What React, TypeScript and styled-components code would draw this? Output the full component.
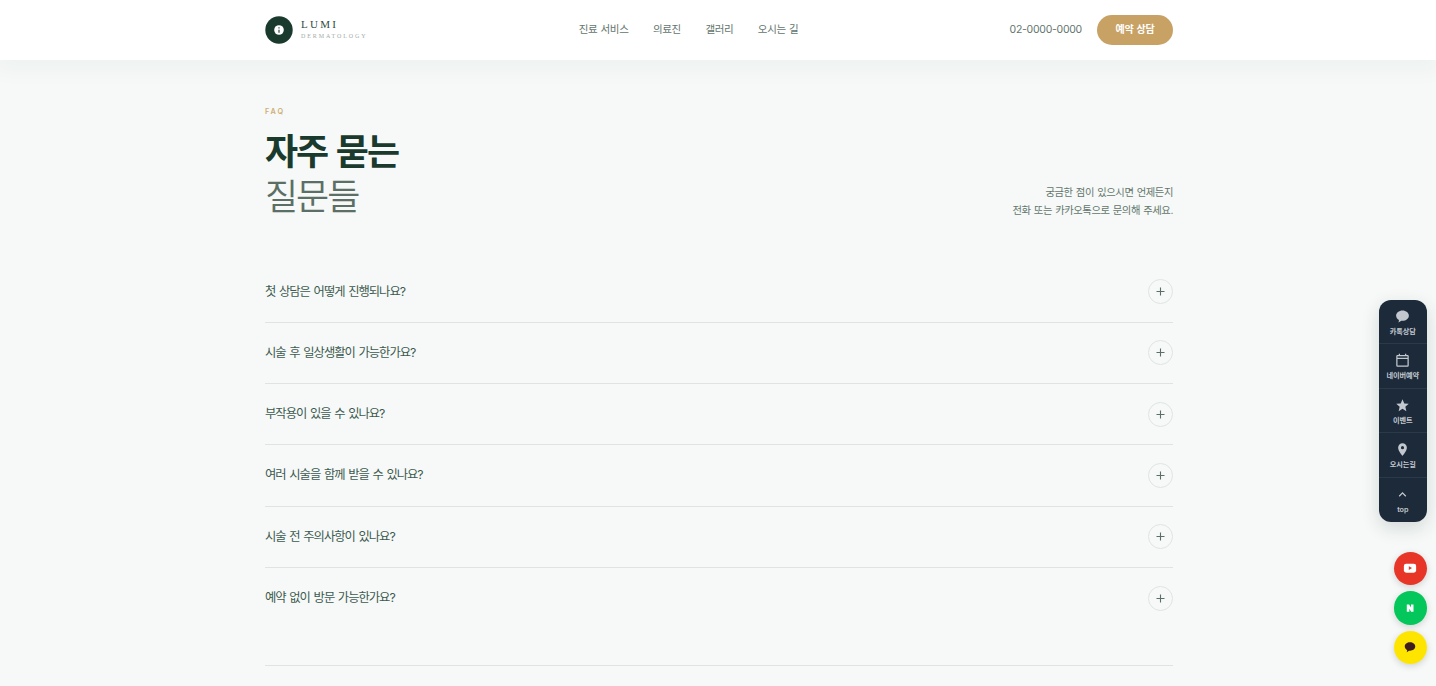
import React from "react";
import styled, { createGlobalStyle } from "styled-components";

const Global = createGlobalStyle`
  * { box-sizing: border-box; }
  body { margin: 0; background: #f6f9f7; overflow: hidden; font-family: Inter, "Noto Sans CJK KR", sans-serif; }
  a { color: inherit; text-decoration: none; }
  button { font: inherit; border: 0; padding: 0; }
`;

const Page = styled.div`
  height: 686px;
  overflow: hidden;
`;

const Header = styled.header`
  position: relative;
  height: 60px;
  background: #fff;
  box-shadow: 0 3px 22px 6px rgba(26, 58, 46, 0.04);
`;

const Container = styled.div`
  width: 908px;
  margin: 0 auto;
  position: relative;
  left: 1px;
`;

const HeaderInner = styled(Container)`
  height: 59px;
  display: flex;
  justify-content: space-between;
  align-items: center;
`;

const Brand = styled.a`
  display: flex;
  align-items: center;
  gap: 8px;
`;

const BrandMark = styled.svg`
  width: 28px;
  height: 28px;
  display: block;
`;

const BrandText = styled.span`
  display: flex;
  flex-direction: column;
  font-family: "Liberation Serif", serif;
`;

const BrandName = styled.span`
  font-size: 11px;
  line-height: 11px;
  letter-spacing: 2.3px;
  color: #2f4a3f;
`;

const BrandSub = styled.span`
  font-size: 6px;
  line-height: 9px;
  margin-top: 2px;
  letter-spacing: 1.9px;
  color: #a3aba7;
`;

const Nav = styled.nav`
  display: flex;
  gap: 24.5px;
  padding-top: 1px;
  font-size: 10.5px;
  line-height: 16px;
  color: #63756d;
  letter-spacing: -0.35px;
  word-spacing: 0.5px;
`;

const Actions = styled.div`
  display: flex;
  align-items: center;
  justify-content: flex-end;
  gap: 15px;
`;

const Phone = styled.a`
  font-size: 10.5px;
  line-height: 16px;
  padding-top: 1px;
  letter-spacing: -0.27px;
  color: #63756d;
`;

const Reserve = styled.button`
  width: 76px;
  height: 30px;
  border-radius: 15px;
  background: #c8a265;
  color: #fff;
  font-size: 10px;
  line-height: 28px;
  padding-bottom: 1px;
  font-weight: 600;
  letter-spacing: -0.25px;
  word-spacing: 0.8px;
`;

const SectionHead = styled.div`
  display: flex;
  justify-content: space-between;
  align-items: flex-end;
  padding-top: 46.5px;
`;

const Eyebrow = styled.div`
  font-size: 7.3px;
  line-height: 10px;
  font-weight: 600;
  letter-spacing: 1.9px;
  color: #cfae78;
`;

const Title = styled.h2`
  margin: 13px 0 0;
  font-size: 36px;
  line-height: 45px;
  font-weight: 600;
  letter-spacing: -2px;
  word-spacing: 1.5px;
  color: #1a3a2e;
`;

const TitleLight = styled.span`
  display: block;
  font-weight: 350;
  color: #5c6f66;
`;

const Lead = styled.p`
  margin: 0;
  padding-bottom: 0.5px;
  text-align: right;
  font-size: 10.3px;
  line-height: 17.3px;
  letter-spacing: -0.4px;
  word-spacing: 0.7px;
  color: #63756d;
`;

const List = styled.ul`
  list-style: none;
  margin: 42px 0 0;
  padding: 0;
`;

const Item = styled.li`
  height: 61.25px;
  display: flex;
  align-items: center;
  justify-content: space-between;
  border-bottom: 1px solid #dfe4e1;
  &:last-child { border-bottom: 0; }
`;

const Question = styled.span`
  font-size: 12.3px;
  line-height: 20px;
  letter-spacing: -1px;
  word-spacing: 1.2px;
  color: #3d5a50;
`;

const Toggle = styled.span`
  width: 25px;
  height: 25px;
  border: 1px solid #dfe5e2;
  border-radius: 50%;
  display: grid;
  place-items: center;
  svg { width: 9px; height: 9px; display: block; }
`;

const SectionEnd = styled.hr`
  margin: 35.5px 0 0;
  border: 0;
  height: 1px;
  background: #dfe4e1;
`;

const Rail = styled.aside`
  position: fixed;
  top: 299.5px;
  right: 9px;
  width: 48.5px;
  border-radius: 12px;
  overflow: hidden;
  background: #1c2a3a;
  color: #c3c8ce;
`;

const RailShadow = styled(Rail)`
  height: 222px;
  background: none;
  box-shadow: 0 6px 18px rgba(28, 42, 58, 0.16);
`;

const RailLink = styled.a`
  height: 44.6px;
  display: flex;
  flex-direction: column;
  align-items: center;
  padding-top: 9px;
  border-bottom: 1px solid #2b3a4a;
  &:last-child { border-bottom: 0; }
  svg { width: 15px; height: 15px; display: block; flex: none; }
`;

const RailLabel = styled.span`
  margin-top: 3px;
  font-size: 7.2px;
  line-height: 10px;
  font-weight: 600;
  letter-spacing: -0.1px;
  white-space: nowrap;
`;

const Socials = styled.div`
  position: fixed;
  right: 9px;
  top: 551.5px;
  display: flex;
  flex-direction: column;
  gap: 6px;
`;

const Social = styled.a<{ $bg: string }>`
  width: 33.5px;
  height: 33.5px;
  border-radius: 50%;
  background: ${(p) => p.$bg};
  display: grid;
  place-items: center;
  box-shadow: 0 2px 7px rgba(0, 0, 0, 0.16);
  svg { width: 14px; height: 14px; display: block; }
`;

const questions = [
  "첫 상담은 어떻게 진행되나요?",
  "시술 후 일상생활이 가능한가요?",
  "부작용이 있을 수 있나요?",
  "여러 시술을 함께 받을 수 있나요?",
  "시술 전 주의사항이 있나요?",
  "예약 없이 방문 가능한가요?",
];

const quickLinks = [
  {
    label: "카톡상담",
    icon: <path fill="currentColor" d="M12 2.500C6.300 2.500 1.800 6.200 1.800 10.700c0 2.900 1.800 5.400 4.600 6.900L5.600 21.500l4.600-2.700c.6.1 1.200.1 1.800.1 5.700 0 10.200-3.700 10.200-8.200S17.700 2.500 12 2.500z" />,
  },
  {
    label: "네이버예약",
    icon: <path fill="currentColor" d="M20 3h-2V1h-2v2H8V1H6v2H4a2 2 0 0 0-2 2v15a2 2 0 0 0 2 2h16a2 2 0 0 0 2-2V5a2 2 0 0 0-2-2zm0 17H4V9.500h16V20zm0-12.500H4V5h16v2.500z" />,
  },
  {
    label: "이벤트",
    icon: <path fill="currentColor" d="M12 17.270 18.180 21l-1.640-7.030L22 9.240l-7.190-.61L12 2 9.190 8.630 2 9.240l5.460 4.730L5.820 21z" />,
  },
  {
    label: "오시는길",
    icon: <path fill="currentColor" d="M12 2a7 7 0 0 0-7 7c0 5.250 7 13 7 13s7-7.750 7-13a7 7 0 0 0-7-7zm0 9.500a2.500 2.500 0 1 1 0-5 2.500 2.500 0 0 1 0 5z" />,
  },
  {
    label: "top",
    icon: <path fill="currentColor" d="m7.400 15.400 4.600-4.600 4.600 4.600L18 14l-6-6-6 6z" />,
  },
];

export default function App() {
  return (
    <Page>
      <Global />
      <Header>
        <HeaderInner>
          <Brand href="#">
            <BrandMark viewBox="0 0 28 28">
              <circle cx="14" cy="14" r="13.7" fill="#1a3a2e" />
              <circle cx="14" cy="14" r="4.8" fill="#fff" />
              <path d="M14 11.300v1.200M14 13.700v3" stroke="#1a3a2e" strokeWidth="1.1" />
            </BrandMark>
            <BrandText>
              <BrandName>LUMI</BrandName>
              <BrandSub>DERMATOLOGY</BrandSub>
            </BrandText>
          </Brand>
          <Nav>
            <a>진료 서비스</a>
            <a>의료진</a>
            <a>갤러리</a>
            <a>오시는 길</a>
          </Nav>
          <Actions>
            <Phone>02-0000-0000</Phone>
            <Reserve>예약 상담</Reserve>
          </Actions>
        </HeaderInner>
      </Header>

      <Container as="main">
        <SectionHead>
          <div>
            <Eyebrow>FAQ</Eyebrow>
            <Title>
              자주 묻는
              <TitleLight>질문들</TitleLight>
            </Title>
          </div>
          <Lead>
            궁금한 점이 있으시면 언제든지
            <br />
            전화 또는 카카오톡으로 문의해 주세요.
          </Lead>
        </SectionHead>
        <List>
          {questions.map((q) => (
            <Item key={q}>
              <Question>{q}</Question>
              <Toggle>
                <svg viewBox="0 0 9 9">
                  <path d="M4.500.500v8M.500 4.500h8" stroke="#5c6f66" strokeWidth="1.1" />
                </svg>
              </Toggle>
            </Item>
          ))}
        </List>
        <SectionEnd />
      </Container>

      <RailShadow as="div" />
      <Rail>
        {quickLinks.map((l) => (
          <RailLink key={l.label}>
            <svg viewBox="0 0 24 24">{l.icon}</svg>
            <RailLabel>{l.label}</RailLabel>
          </RailLink>
        ))}
      </Rail>

      <Socials>
        <Social $bg="#e73527">
          <svg viewBox="0 0 24 24">
            <rect x="1.500" y="4.500" width="21" height="15.500" rx="4" fill="#fff" />
            <path d="M10 9v6.400l5.500-3.200z" fill="#e73527" />
          </svg>
        </Social>
        <Social $bg="#03c75a">
          <svg viewBox="0 0 24 24">
            <path fill="#fff" d="M6.500 6h4l3.200 5.200V6h4.300v12.500h-4l-3.200-5.200v5.200H6.500z" />
          </svg>
        </Social>
        <Social $bg="#fee500">
          <svg viewBox="0 0 24 24">
            <path fill="#3c1e1e" d="M12 4C7 4 3 7.200 3 11.200c0 2.600 1.700 4.800 4.200 6.100l-.8 3.500 4-2.500c.5.100 1.100.1 1.600.1 5 0 9-3.200 9-7.200S17 4 12 4z" />
          </svg>
        </Social>
      </Socials>
    </Page>
  );
}
